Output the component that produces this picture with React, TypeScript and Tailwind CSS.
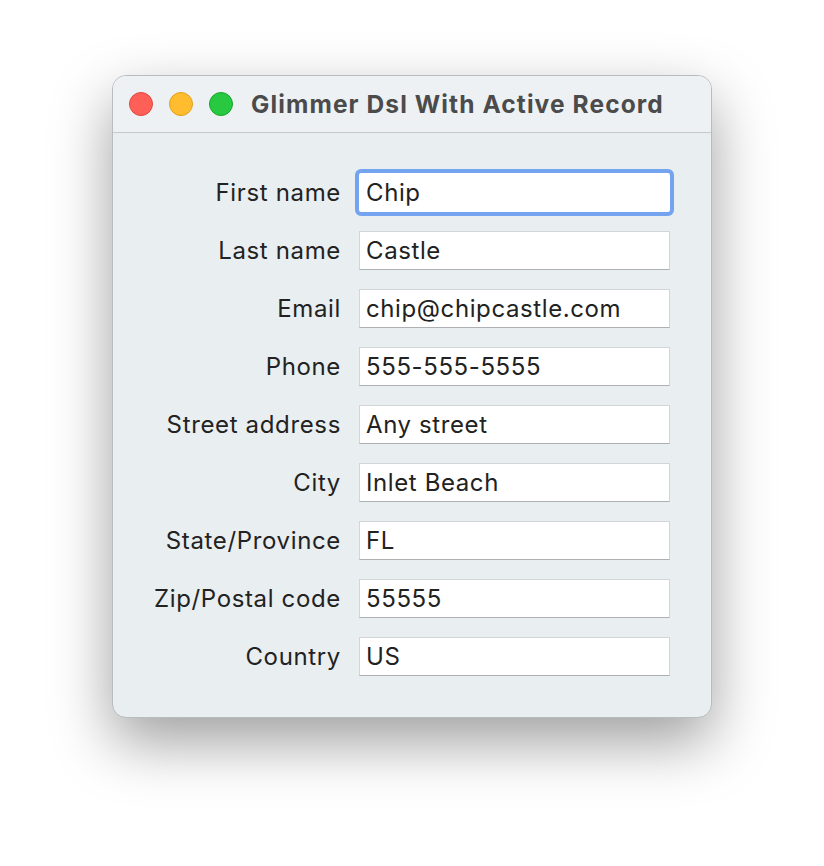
const fields: [string, string][] = [
  ["First name", "Chip"],
  ["Last name", "Castle"],
  ["Email", "chip@chipcastle.com"],
  ["Phone", "555-555-5555"],
  ["Street address", "Any street"],
  ["City", "Inlet Beach"],
  ["State/Province", "FL"],
  ["Zip/Postal code", "55555"],
  ["Country", "US"],
];

export default function App() {
  return (
    <div
      className="w-[824px] h-[866px] bg-white pt-[75px] pl-[112px]"
      style={{ fontFamily: "Inter, 'Noto Sans', sans-serif" }}
    >
      <div className="w-[600px] h-[643px] rounded-[14px] bg-[#e9eef1] border border-[#b9bcbe] shadow-[0_24px_60px_rgba(0,0,0,0.38)] overflow-hidden">
        <div className="h-[57px] flex items-center border-b border-[#c6c9cb] bg-[#edf1f4]">
          <div className="flex gap-4 pl-[16px]">
            <span className="w-[24px] h-[24px] rounded-full bg-[#fe5f57] border border-[#e2463f]" />
            <span className="w-[24px] h-[24px] rounded-full bg-[#febc2e] border border-[#e1a116]" />
            <span className="w-[24px] h-[24px] rounded-full bg-[#28c840] border border-[#13a82a]" />
          </div>
          <div className="ml-[18px] text-[24.5px] font-bold text-[#4b4b4b] tracking-[1.1px]">
            Glimmer Dsl With Active Record
          </div>
        </div>
        <div className="pt-[40px] flex flex-col gap-[19px]">
          {fields.map(([label, value], i) => (
            <div key={label} className="flex items-center h-[39px]">
              <div className="w-[246px] text-right text-[24px] text-[#222] pr-[18px] tracking-[0.65px]">{label}</div>
              <div
                className={
                  i === 0
                    ? "w-[311px] h-[39px] bg-white outline-[4px] outline-solid outline-[#74a3ef] rounded-[2px] pl-[7px] text-[24px] text-[#222] tracking-[0.6px] flex items-center"
                    : "w-[311px] h-[39px] bg-white border border-[#d3d6d8] border-b-[#aeb1b3] pl-[6px] text-[24px] text-[#222] tracking-[0.6px] flex items-center"
                }
              >
                {value}
              </div>
            </div>
          ))}
        </div>
      </div>
    </div>
  );
}
